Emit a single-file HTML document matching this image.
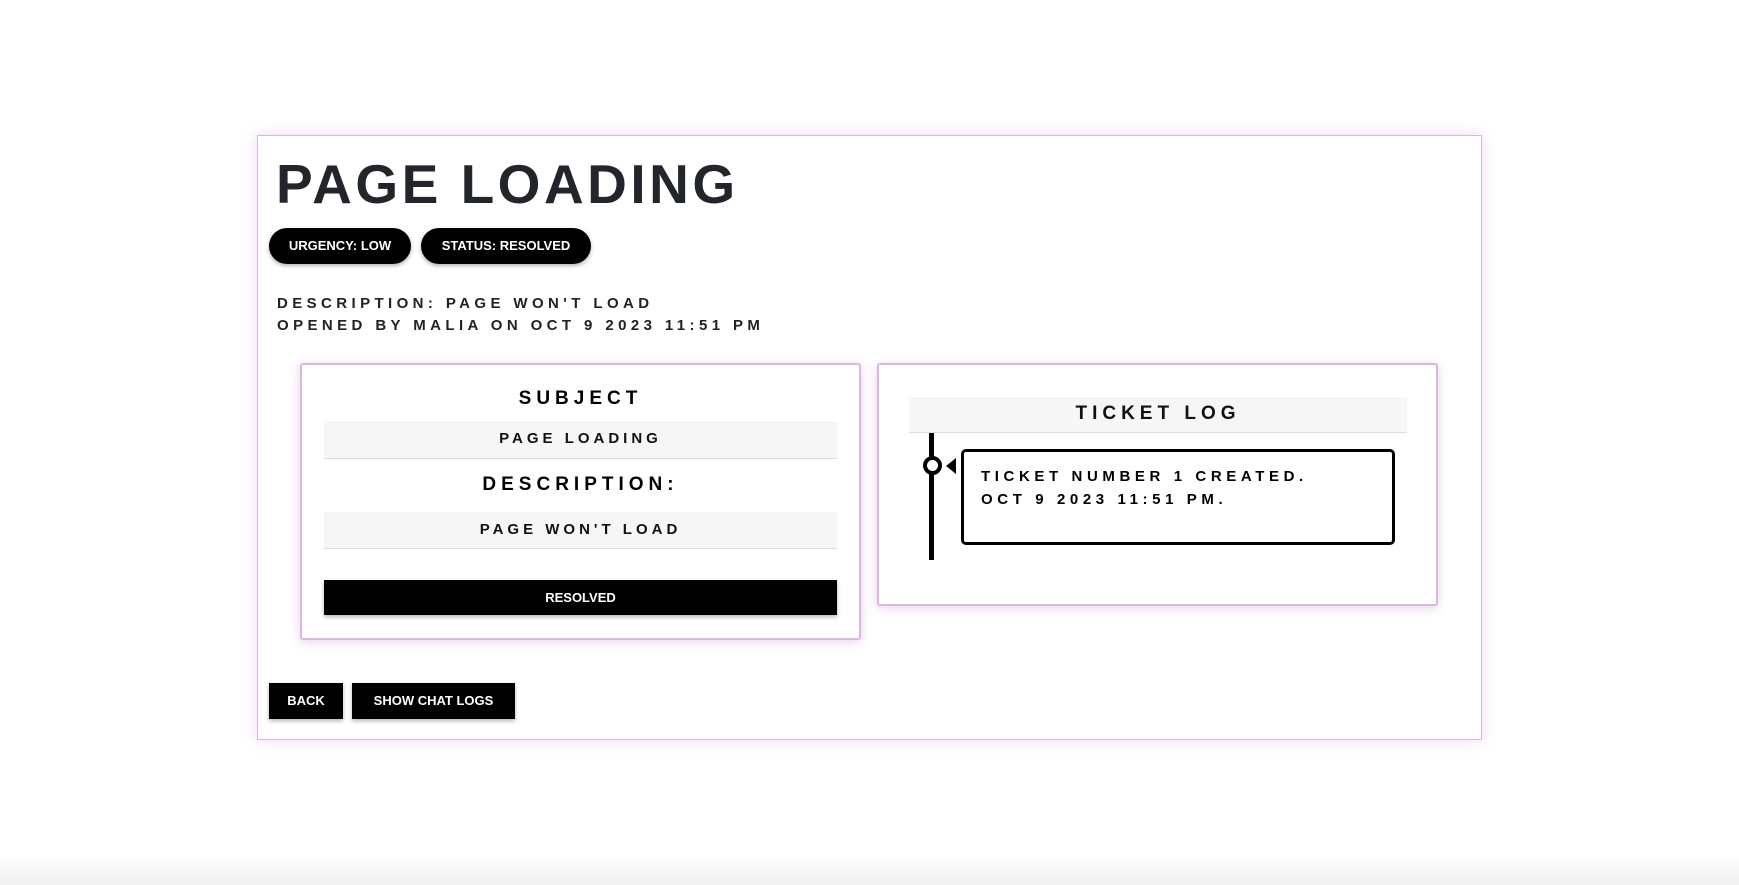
<!DOCTYPE html>
<html><head><style>
*{box-sizing:border-box;margin:0;padding:0}
body{width:1739px;height:885px;background:linear-gradient(#fff 0,#fff 855px,#f1f1f1 885px);font-family:"Liberation Sans",sans-serif;position:relative;overflow:hidden}
.abs{position:absolute}
.card{position:absolute;left:257px;top:135px;width:1225px;height:605px;border:1px solid #dbb6e0;background:#fff;box-shadow:0 0 14px rgba(200,150,210,.35)}
h1{position:absolute;left:276px;top:152px;font-size:55px;letter-spacing:3.5px;color:#22262b;font-weight:bold}
.pill{position:absolute;top:228px;height:36px;background:#000;color:#fff;border-radius:18px;font-size:13px;font-weight:bold;line-height:36px;text-align:center;box-shadow:0 2px 4px rgba(0,0,0,.3)}
.desc{position:absolute;left:277px;font-size:15px;font-weight:bold;letter-spacing:4.4px;color:#222}
.sub{position:absolute;border:2px solid #dbb6e0;border-radius:3px;background:#fff;box-shadow:0 2px 10px rgba(200,150,210,.45)}
.bar{position:absolute;left:324px;width:513px;background:#f6f6f6;border-bottom:1px solid #ddd;text-align:center;font-weight:bold;letter-spacing:4px;color:#111}
.btn{position:absolute;background:#000;color:#fff;font-weight:bold;font-size:13px;text-align:center;box-shadow:0 2px 4px rgba(0,0,0,.3)}
</style></head><body>
<div class="card"></div>
<h1>PAGE LOADING</h1>
<div class="pill" style="left:269px;width:142px">URGENCY: LOW</div>
<div class="pill" style="left:421px;width:170px">STATUS: RESOLVED</div>
<div class="desc" style="top:295px">DESCRIPTION: PAGE WON'T LOAD</div>
<div class="desc" style="top:317px">OPENED BY MALIA ON OCT 9 2023 11:51 PM</div>

<div class="sub" style="left:300px;top:363px;width:561px;height:277px"></div>
<div class="abs" style="left:300px;width:561px;top:388px;text-align:center;font-size:19px;font-weight:bold;letter-spacing:5px">SUBJECT</div>
<div class="bar" style="top:421px;height:38px;line-height:36px;font-size:15px">PAGE LOADING</div>
<div class="abs" style="left:300px;width:561px;top:474px;text-align:center;font-size:19px;font-weight:bold;letter-spacing:5px">DESCRIPTION:</div>
<div class="bar" style="top:512px;height:37px;line-height:35px;font-size:15px">PAGE WON'T LOAD</div>
<div class="btn" style="left:324px;top:580px;width:513px;height:35px;line-height:35px">RESOLVED</div>

<div class="sub" style="left:877px;top:363px;width:561px;height:243px"></div>
<div class="bar" style="left:909px;width:498px;top:397px;height:36px;line-height:34px;font-size:19px;letter-spacing:5px">TICKET LOG</div>
<div class="abs" style="left:929px;top:433px;width:5px;height:127px;background:#000"></div>
<div class="abs" style="left:923px;top:456px;width:19px;height:19px;border:4px solid #000;border-radius:50%;background:#fff"></div>
<div class="abs" style="left:946px;top:458px;width:0;height:0;border-top:8px solid transparent;border-bottom:8px solid transparent;border-right:10px solid #000"></div>
<div class="abs" style="left:961px;top:449px;width:434px;height:96px;border:3px solid #000;border-radius:5px;padding:13px 0 0 17px;font-size:15px;font-weight:bold;letter-spacing:4.6px;line-height:23px">TICKET NUMBER 1 CREATED.<br>OCT 9 2023 11:51 PM.</div>

<div class="btn" style="left:269px;top:683px;width:74px;height:36px;line-height:36px">BACK</div>
<div class="btn" style="left:352px;top:683px;width:163px;height:36px;line-height:36px">SHOW CHAT LOGS</div>
</body></html>
